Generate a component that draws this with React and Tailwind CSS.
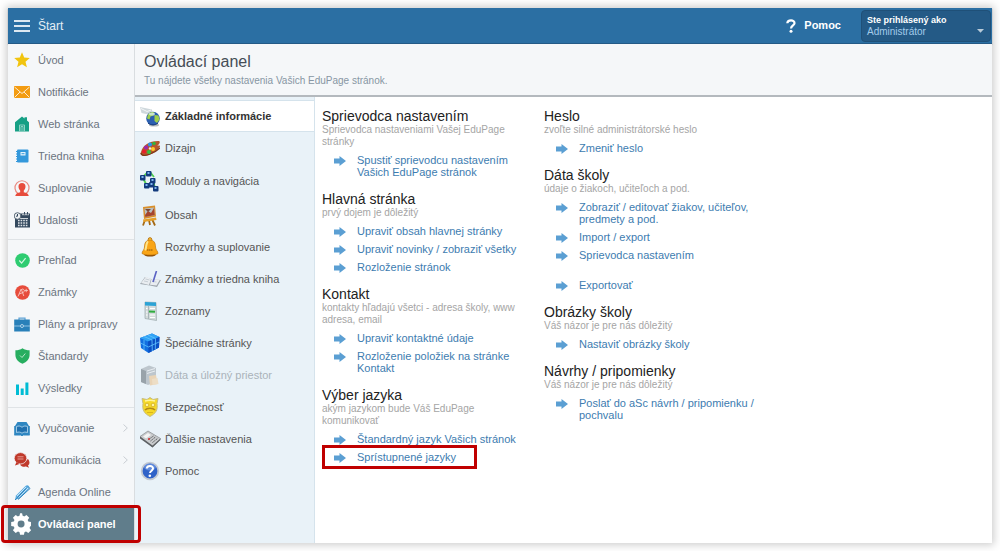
import React from "react";
import clsx from "clsx";

const svg = (w, h, vb, children) => (
  <svg width={w} height={h} viewBox={vb} className="shrink-0" aria-hidden="true">
    {children}
  </svg>
);

const sideIcons = {
  star: svg(16, 16, "0 0 16 16", <path d="M8 .3l2.2 5.3 5.6.4-4.3 3.7 1.4 5.6L8 12.3l-4.9 3 1.4-5.6L.2 6l5.6-.4z" fill="#f1c40f" />),
  mail: svg(16, 12, "0 0 16 12", <>
    <rect width="16" height="12" fill="#f39c12" />
    <path d="M.5 1L8 7.5 15.5 1M.5 11.5L6 6M15.5 11.5L10 6" fill="none" stroke="#fdebd0" />
  </>),
  home: svg(16, 16, "0 0 16 16", <>
    <path d="M8 .5l2.5 2V1.3H13v3.2l2 1.8v9.2H1V6.3z" fill="#16a085" />
    <path d="M5.5 15.5V9h5v6.5M7 15.5V10.500h2v5" fill="none" stroke="#8ed1c3" />
  </>),
  book: svg(16, 16, "0 0 16 16", <>
    <rect x="3" y="1.500" width="11.500" height="13" rx="1" fill="#3498db" />
    <path d="M2 3.500h2M2 6h2M2 8.500h2M2 11h2M2 13.500h2" stroke="#3498db" />
    <rect x="6.500" y="4" width="5" height="3.500" fill="#e4f1fa" />
    <path d="M7.500 5.700h3" stroke="#3498db" />
  </>),
  person: svg(16, 17, "0 0 16 17", <>
    <path d="M4 13.500A7 7 0 1 1 12 13.500" fill="none" stroke="#e98a80" strokeWidth="1.200" />
    <path d="M8 3c2.300 0 3.500 1.400 3.500 3.500 0 1.600-.7 3-1.700 3.900v1.800c2.500.4 4.500 1.200 5 3.800H1.200c.5-2.600 2.500-3.400 5-3.800v-1.800C5.200 9.500 4.500 8.100 4.500 6.500 4.500 4.400 5.700 3 8 3z" fill="#e74c3c" />
  </>),
  calendar: svg(16, 16, "0 0 16 16", <>
    <path d="M1 1.500h15V15.500H1z" fill="#34495e" />
    <path d="M8 2.700h7M3 6.500h11" stroke="#f5f7f9" strokeWidth=".8" />
    <path d="M4 8.500h10M4 11h10M4 13.500h10" stroke="#dfe4e8" strokeWidth="1.400" strokeDasharray="1.600 1" />
    <circle cx="3.500" cy="4" r="3.300" fill="#eef1f3" stroke="#596977" />
    <path d="M3.500 2v2.200H2M10.500 0v2.500M13.500 0v2.500" stroke="#34495e" fill="none" />
  </>),
  check: svg(15, 15, "0 0 15 15", <>
    <circle cx="7.500" cy="7.500" r="7.300" fill="#2ecc71" />
    <path d="M4.300 7.500l2.300 2.600 4-5" fill="none" stroke="#d5f5e3" strokeWidth="1.200" />
  </>),
  grade: svg(15, 15, "0 0 15 15", <>
    <circle cx="7.500" cy="7.500" r="7.300" fill="#e74c3c" />
    <path d="M3 11.500L6.200 4l2.600 7M4 9l4-1.500M9.500 5.500h3.400M11.200 3.800v3.400M7 4c3 0 3 3 .8 3.500" fill="none" stroke="#f7c6c0" strokeWidth=".9" />
  </>),
  brief: svg(16, 15, "0 0 16 15", <>
    <path d="M5 3V1.200h6V3" fill="none" stroke="#5da2d5" strokeWidth="1.200" />
    <rect x=".2" y="2.500" width="15.600" height="12" fill="#2980b9" />
    <path d="M0 9h6.300M9.700 9H16" stroke="#9cc8e6" strokeWidth=".9" />
    <circle cx="8" cy="9" r="1.500" fill="#2980b9" stroke="#cfe4f2" strokeWidth=".8" />
  </>),
  shield: svg(15, 16, "0 0 15 16", <>
    <path d="M7.500.3C9.500 1.700 12 2.300 14.600 2.300v4.500c0 4.300-2.800 7.400-7.100 9C3.200 14.200.4 11.100.4 6.800V2.300C3 2.300 5.500 1.700 7.500.3z" fill="#27ae60" />
    <path d="M5 7.500l2 2 3.300-4" fill="none" stroke="#b9e7cb" />
  </>),
  bars: svg(14, 13, "0 0 14 13", <path d="M1 2.500h3V13H1zM5.700 6.500h3V13h-3zM10.400.5h3V13h-3z" fill="#00bcd4" />),
  teach: svg(16, 15, "0 0 16 15", <>
    <path d="M1 5L3.500 1h9L15 5v9H1z" fill="#2e86c1" />
    <path d="M2.500 5.500c2-.8 4-.6 5.500.8 1.500-1.400 3.500-1.600 5.500-.8v6c-2-.8-4-.5-5.500.7-1.500-1.200-3.500-1.500-5.500-.7z" fill="#1f6fae" stroke="#bcdcf0" strokeWidth=".8" />
    <path d="M.3 5v9h6.200l1.500.8 1.500-.8h6.200V5" fill="none" stroke="#2e86c1" />
  </>),
  chat: svg(16, 16, "0 0 16 16", <>
    <path d="M14 7c2 2.500 2 5 0 6.500l1 2.300-3-1.200c-3 .4-5-.5-6-2.200" fill="#c0392b" />
    <ellipse cx="6.500" cy="6.300" rx="6.300" ry="5.700" fill="#c0392b" stroke="#f5f7f9" strokeWidth=".7" />
    <path d="M2.500 10L1 13.500 5.500 12z" fill="#c0392b" />
    <path d="M3.500 4.800h6M3.500 7h6" stroke="#f0b8b2" strokeWidth=".8" />
  </>),
  pen: svg(17, 17, "0 0 17 17", <>
    <path d="M1 15.800l1-4.300L11.500 2c2-1.800 5 .6 3.200 2.900L5.500 14.500z" fill="#5dade2" />
    <path d="M1 15.800l1.800-1.300L12 4.500M4 15.500L16 4.500l-2-2" fill="none" stroke="#2980b9" />
    <path d="M3 12l9-9M4.700 13.500l9.500-9.700" stroke="#d6eaf8" strokeWidth=".9" />
  </>),
  gear: svg(22, 22, "0 0 24 24", <path fill="#fff" d="M21.800 14.100V9.900l-2.900-.6a7 7 0 0 0-.7-1.700l1.700-2.500-3-3-2.500 1.700a7 7 0 0 0-1.700-.7L12.100.2h-2.200L9.300 3.100a7 7 0 0 0-1.700.7L5.100 2.100l-3 3 1.700 2.500a7 7 0 0 0-.7 1.700l-2.900.6v4.200l2.900.6c.2.600.4 1.200.7 1.700l-1.700 2.500 3 3 2.500-1.700c.5.300 1.100.5 1.700.7l.6 2.900h4.200l.6-2.900c.6-.2 1.200-.4 1.700-.7l2.500 1.700 3-3-1.700-2.500c.3-.5.5-1.100.7-1.700zM11 15.800a3.800 3.800 0 1 1 0-7.600 3.800 3.800 0 0 1 0 7.600z" />),
};

const node = (x, y) => (
  <g key={`${x}-${y}`}>
    <rect x={x} y={y} width="5.500" height="5.500" rx="1" fill="#123a7d" />
    <rect x={x + 1.5} y={y + 1} width="2" height="2" fill="#7db4ee" />
  </g>
);

const menuIcons = {
  globe: svg(20, 21, "0 0 20 21", <>
    <path d="M0 1l12 2.500 1 6L1.500 7z" fill="#cfd8dc" />
    <path d="M1 2.500l6 3 4-1.500" fill="none" stroke="#f3f6f7" />
    <ellipse cx="14" cy="19" rx="5" ry="1.500" fill="#b5b9bb" />
    <circle cx="13" cy="12.500" r="6.800" fill="#2b5fb0" />
    <path d="M8 8.500c2-3 5-3 6.500-2l-1 3-3 1-1 3-2.500-1zM14.500 9l4 .5 1 4-2.500 3.500-2.500-2z" fill="#9fd04a" />
    <path d="M8 17c3 2.500 7 2.500 10 0" stroke="#173a78" fill="none" />
    <ellipse cx="12" cy="8" rx="3" ry="1.500" fill="#dcefff" opacity=".7" />
  </>),
  palette: svg(20, 17, "0 0 20 17", <>
    <path d="M1 12C3 5 9 1 18 1c3 0 2 3-1 5 3-1 4 0 2 2-3 4-8 7-14 8-4 0-5-2-4-4z" fill="#b5572c" />
    <path d="M1 13c0 3 5 3 9 1 4-1 8-4 10-6" fill="none" stroke="#7d3819" strokeWidth="1.200" />
    <circle cx="10" cy="4.500" r="2" fill="#2196f3" /><circle cx="6" cy="7.500" r="2" fill="#9c27b0" />
    <circle cx="4" cy="11.500" r="2" fill="#e91e29" /><circle cx="14" cy="3.500" r="1.800" fill="#35b33b" />
    <circle cx="9" cy="12" r="2" fill="#33c345" /><circle cx="13" cy="9" r="2" fill="#ffc928" />
    <circle cx="10" cy="8.500" r="1.200" fill="#f4e7dc" />
  </>),
  modules: svg(20, 23, "0 0 20 23", <>
    <path d="M4 6l4-4M10 2l4 5M3 8l4 8M11 9l4 8M10 14l5 0" stroke="#4fd04f" strokeWidth="1.800" />
    {node(6, 1)}{node(0, 5)}{node(10, 8)}{node(4, 13)}{node(13, 16)}{node(9, 12)}
  </>),
  easel: svg(20, 21, "0 0 20 21", <>
    <path d="M5 15L3 20.500M12 14l3 6.500M9 15l1 5" stroke="#a56a14" strokeWidth="1.800" />
    <path d="M3 2l12-1.500 1 11L4 14z" fill="#d98f2b" />
    <path d="M4.500 3.500l9.500-1 .8 7.500-9.500 2z" fill="#b9c0c0" />
    <path d="M5 10l3-4 3 2 3-5 .8 7-9.500 2z" fill="#a6452c" />
    <path d="M5 4h6l-3 3z" fill="#7c4a3a" />
    <path d="M3 14.500l13-2 .5 2.500-13 2z" fill="#e6a029" />
  </>),
  bell: svg(20, 20, "0 0 20 20", <>
    <ellipse cx="10" cy="17.500" rx="6" ry="2" fill="#8a4b06" />
    <circle cx="10" cy="2.500" r="1.800" fill="#ffcb3d" stroke="#b8720c" />
    <path d="M10 3c4 0 5.500 3 5.500 7 0 3 2.500 4 2.500 6.500-3 2-13 2-16 0C2 14 4.500 13 4.500 10c0-4 1.500-7 5.500-7z" fill="#f9a517" stroke="#c0770c" strokeWidth=".7" />
    <path d="M7.500 5c-1.500 2-1 5-2 7.500" stroke="#ffe58a" strokeWidth="2" fill="none" strokeLinecap="round" />
    <path d="M7 13h6" stroke="#8d5207" strokeDasharray="1.500 .5" />
  </>),
  journal: svg(21, 17, "0 0 21 17", <>
    <path d="M0 13l5-7 6 2 10 1-4 7-7-1.500z" fill="#9ea6ad" />
    <path d="M1 12l5-6.500 5 2.500-2 6zM11.500 8l8.500.5-3.500 6-6.500-.7z" fill="#e9edf1" />
    <path d="M4 10l4 .8M5.500 8l4 1M12.500 10.500l4 .5" stroke="#b9c2c9" strokeWidth=".7" />
    <path d="M16.500 0L13 11" stroke="#5a62c4" strokeWidth="1.600" />
  </>),
  list: svg(20, 21, "0 0 20 21", <>
    <path d="M5 1l11 .5.500 18L5 17.500z" fill="#d3dbdc" stroke="#9aa8ab" strokeWidth=".7" />
    <path d="M5 1l11 .5V5L5 4.500z" fill="#2ba3d6" />
    <path d="M8.500 5v13" stroke="#a8b5b8" />
    <path d="M9 10.500l6 .3" stroke="#2fad3f" strokeWidth="2" />
    <path d="M10 7.500h5M10 14h5M10 16.500h5M6 7.500h1.500M6 11h1.500M6 14h1.500" stroke="#fff" />
  </>),
  cube: svg(20, 20, "0 0 20 20", <>
    <path d="M0 5L12 .5 19.500 4 19 14.500 8.500 20 1 15z" fill="#126fe0" />
    <path d="M0 5L12 .5 19.500 4 8 8.500z" fill="#31a3f5" />
    <path d="M8 8.500L19.500 4 19 14.500 8.500 20z" fill="#0a4fc4" />
    <path d="M4 3.500l8 3.500.3 11M.5 10l7.800 4L19 9M8 2l7.500 3.500-.2 11M4 7v10" stroke="#62c5ff" strokeWidth=".8" fill="none" />
  </>),
  server: svg(20, 21, "0 0 20 21", <g opacity=".55">
    <path d="M1 4l8-3.500 7 2.500v14L8 20l-7-3z" fill="#9aa3aa" />
    <path d="M1 4l5 2v13l-5-2z" fill="#59636c" />
    <path d="M7 6l8-2.500M7 8.500l8-2.500" stroke="#e7eaec" />
    <path d="M9 11l7-1 1.500 9-7.500 1.500z" fill="#e9bd83" />
    <path d="M12 14l5.500-1 1 6-6 1z" fill="#f2cf9f" />
  </g>),
  guard: svg(20, 20, "0 0 20 20", <>
    <path d="M10 .5l3 2 5-1-1 5c1 6-1 10-7 13-6-3-8-7-7-13l-1-5 5 1z" fill="#f5d827" stroke="#c7bd83" />
    <path d="M5 4c3-1 7-1 10 0" stroke="#fff49a" strokeWidth="1.500" fill="none" />
    <circle cx="7" cy="8" r="1.800" fill="#fff3a0" stroke="#c49c0e" strokeWidth=".6" />
    <circle cx="13" cy="8" r="1.800" fill="#fff3a0" stroke="#c49c0e" strokeWidth=".6" />
    <path d="M5 13c2-2.500 8-2.500 10 0" stroke="#b58a13" strokeWidth="1.500" fill="none" />
    <path d="M7 15.500h6" stroke="#d9b51b" />
  </>),
  device: svg(21, 18, "0 0 21 18", <>
    <path d="M0 6.500L8 1l12.500 7.500-8 8.500z" fill="#c9cbcd" stroke="#85898c" strokeWidth=".7" />
    <path d="M0 6.500l12.500 9 8-7v1.500L12.500 17.500 0 8.500z" fill="#5d6164" />
    <path d="M3 6.500l5-3.500 3 2-5 3.500z" fill="#f3f4f4" />
    <path d="M8.500 9.500l5-3.500M10.500 11l5-4M12.500 12.500l5-4" stroke="#55595c" strokeDasharray="1.500 .8" />
    <circle cx="9" cy="9" r=".9" fill="#d22" />
  </>),
  help: svg(20, 20, "0 0 20 20", <>
    <circle cx="10" cy="10" r="8.300" fill="#2f62c8" stroke="#c3c9d2" strokeWidth="1.800" />
    <ellipse cx="10" cy="6" rx="6" ry="3.500" fill="#7ea5ea" opacity=".6" />
    <path d="M6.800 7.500c.3-3.500 6.600-3.300 6.200.2-.2 2-2.800 2-3 4.300" fill="none" stroke="#fff" strokeWidth="2" />
    <circle cx="9.800" cy="14.700" r="1.300" fill="#fff" />
  </>),
};

const sideGroups = [
  [
    { icon: "star", label: "Úvod" },
    { icon: "mail", label: "Notifikácie" },
    { icon: "home", label: "Web stránka" },
    { icon: "book", label: "Triedna kniha" },
    { icon: "person", label: "Suplovanie" },
    { icon: "calendar", label: "Udalosti" },
  ],
  [
    { icon: "check", label: "Prehľad" },
    { icon: "grade", label: "Známky" },
    { icon: "brief", label: "Plány a prípravy" },
    { icon: "shield", label: "Štandardy" },
    { icon: "bars", label: "Výsledky" },
  ],
  [
    { icon: "teach", label: "Vyučovanie", more: true },
    { icon: "chat", label: "Komunikácia", more: true },
    { icon: "pen", label: "Agenda Online" },
    { icon: "gear", label: "Ovládací panel", active: true },
  ],
];

const menu = [
  { icon: "globe", label: "Základné informácie", active: true },
  { icon: "palette", label: "Dizajn" },
  { icon: "modules", label: "Moduly a navigácia" },
  { icon: "easel", label: "Obsah" },
  { icon: "bell", label: "Rozvrhy a suplovanie" },
  { icon: "journal", label: "Známky a triedna kniha" },
  { icon: "list", label: "Zoznamy" },
  { icon: "cube", label: "Špeciálne stránky" },
  { icon: "server", label: "Dáta a úložný priestor", disabled: true },
  { icon: "guard", label: "Bezpečnosť" },
  { icon: "device", label: "Ďalšie nastavenia" },
  { icon: "help", label: "Pomoc" },
];

const columns = [
  [
    {
      title: "Sprievodca nastavením",
      text: "Sprievodca nastaveniami Vašej EduPage stránky",
      links: [{ label: "Spustiť sprievodcu nastavením Vašich EduPage stránok" }],
    },
    {
      title: "Hlavná stránka",
      text: "prvý dojem je dôležitý",
      links: [
        { label: "Upraviť obsah hlavnej stránky" },
        { label: "Upraviť novinky / zobraziť všetky" },
        { label: "Rozloženie stránok" },
      ],
    },
    {
      title: "Kontakt",
      text: "kontakty hľadajú všetci - adresa školy, www adresa, email",
      links: [{ label: "Upraviť kontaktné údaje" }, { label: "Rozloženie položiek na stránke Kontakt" }],
    },
    {
      title: "Výber jazyka",
      text: "akým jazykom bude Váš EduPage komunikovať",
      links: [{ label: "Štandardný jazyk Vašich stránok" }, { label: "Sprístupnené jazyky", marked: true }],
    },
  ],
  [
    { title: "Heslo", text: "zvoľte silné administrátorské heslo", links: [{ label: "Zmeniť heslo" }] },
    {
      title: "Dáta školy",
      text: "údaje o žiakoch, učiteľoch a pod.",
      links: [
        { label: "Zobraziť / editovať žiakov, učiteľov, predmety a pod." },
        { label: "Import / export" },
        { label: "Sprievodca nastavením" },
        { label: "Exportovať", spaced: true },
      ],
    },
    { title: "Obrázky školy", text: "Váš názor je pre nás dôležitý", links: [{ label: "Nastaviť obrázky školy" }] },
    {
      title: "Návrhy / pripomienky",
      text: "Váš názor je pre nás dôležitý",
      links: [{ label: "Poslať do aSc návrh / pripomienku / pochvalu" }],
    },
  ],
];

function Header() {
  return (
    <header className="flex h-9 items-center justify-between border-b border-[#245a86] bg-[#2b6fa3] text-white shadow-[0_1px_1px_#8a9096]">
      <div className="flex items-center gap-2 pl-1.5">
        <button aria-label="Menu" className="flex w-4 flex-col gap-[3px]">
          <span className="h-0.5 bg-[#dce8f1]" />
          <span className="h-0.5 bg-[#dce8f1]" />
          <span className="h-0.5 bg-[#dce8f1]" />
        </button>
        <span className="text-xs text-[#e4eef5]">Štart</span>
      </div>
      <div className="flex items-center gap-5 pr-px">
        <a href="#pomoc" className="flex items-center gap-2 text-[11px] font-bold">
          {svg(10, 14, "0 0 10 14", <>
            <path d="M1.300 4.200C1.500.4 8.700.4 8.500 4.200 8.400 6.500 5.200 6.300 5 9.500" fill="none" stroke="#fff" strokeWidth="2.200" />
            <circle cx="5" cy="12.200" r="1.500" fill="#fff" />
          </>)}
          Pomoc
        </a>
        <button className="flex h-8 w-[130px] justify-between rounded-sm border border-[#1f5078] bg-[#245a86] pr-1.5 pl-[5px] text-left">
          <span className="pt-[3px]">
            <b className="block text-[9px] leading-3">Ste prihlásený ako</b>
            <span className="block text-[10px] leading-3 text-[#a3cbea]">Administrátor</span>
          </span>
          <span className="flex items-end pb-2">
            {svg(7, 4, "0 0 7 4", <path d="M0 0h7L3.500 3.800z" fill="#b9cbd9" />)}
          </span>
        </button>
      </div>
    </header>
  );
}

function SideItem({ item }) {
  return (
    <a
      href="#"
      className={clsx(
        "relative flex h-8 items-center gap-2 pl-1.5 text-[11px]",
        item.active ? "bg-[#607d8b] font-bold text-white" : "text-[#6b7480]"
      )}
    >
      <span className="flex w-4 shrink-0 justify-center">{sideIcons[item.icon]}</span>
      <span className="grow">{item.label}</span>
      {item.more && (
        <span className="pr-1.5">
          {svg(5, 8, "0 0 5 8", <path d="M.5.5L4.300 4 .5 7.500" fill="none" stroke="#c9ced3" />)}
        </span>
      )}
      {item.active && <span className="absolute -inset-x-[7px] -inset-y-[3px] rounded-sm border-3 border-[#c00000]" />}
    </a>
  );
}

function MenuItem({ item }) {
  return (
    <a
      href="#"
      className={clsx(
        "flex min-h-8 items-center gap-[5px] pl-[5px] text-[11px]",
        item.icon === "modules" && "py-1.5",
        item.active && "border-y border-[#d5e3ec] bg-white font-bold text-[#333]",
        item.disabled ? "text-[#a9b3ba]" : !item.active && "text-[#555]"
      )}
    >
      <span className="flex w-5 shrink-0 justify-center">{menuIcons[item.icon]}</span>
      {item.label}
    </a>
  );
}

function Section({ section }) {
  return (
    <section>
      <h2 className="text-sm leading-4 text-[#222]">{section.title}</h2>
      <p className="mb-[3px] w-[204px] text-[10px] leading-3 text-[#a5a5a5]">{section.text}</p>
      <ul>
        {section.links.map((l) => (
          <li key={l.label} className={clsx("relative py-[3px] pr-2 pl-3", l.spaced && "mt-3")}>
            <a href="#" className="flex gap-[11px] text-[11px] leading-3 text-[#3d7cb0]">
              <span className="pt-0.5">
                {svg(12, 10, "0 0 12 10", <path d="M0 2.500h5.500V0L12 5 5.500 10V7.500H0z" fill="#5b9fd3" />)}
              </span>
              {l.label}
            </a>
            {l.marked && <span className="absolute -inset-y-[3px] left-0 w-[155px] border-3 border-[#c00000]" />}
          </li>
        ))}
      </ul>
    </section>
  );
}

export default function App() {
  return (
    <div className="bg-white p-2 font-['Liberation_Sans',Arial,sans-serif]">
      <div className="bg-white shadow-[0_0_8px_2px_rgba(0,0,0,0.2)]">
        <Header />
        <div className="flex">
          <nav className="w-[127px] shrink-0 border-r border-[#d9dde0] bg-[#f5f7f9] pb-[3px]">
            {sideGroups.map((group, i) => (
              <div
                key={i}
                className={clsx(i > 0 && "pt-1", i < sideGroups.length - 1 && "border-b border-[#dfe3e6] pb-[3px]")}
              >
                {group.map((item) => (
                  <SideItem key={item.label} item={item} />
                ))}
              </div>
            ))}
          </nav>
          <div className="flex min-w-0 grow flex-col">
            <div className="border-b-2 border-[#b4b9be] bg-[#f5f7f9] px-[9px] pt-2 pb-[5px]">
              <h1 className="text-base leading-5 text-[#454d56]">Ovládací panel</h1>
              <p className="text-[10px] leading-[18px] text-[#8796a3]">
                Tu nájdete všetky nastavenia Vašich EduPage stránok.
              </p>
            </div>
            <div className="flex grow">
              <nav className="w-[180px] shrink-0 border-r border-[#d5e3ec] bg-[#e9f2f8] pt-[3px]">
                {menu.map((item) => (
                  <MenuItem key={item.label} item={item} />
                ))}
              </nav>
              <main className="flex grow pt-[11px] pl-[7px]">
                {columns.map((col, i) => (
                  <div key={i} className="flex w-[222px] flex-col gap-2.5">
                    {col.map((s) => (
                      <Section key={s.title} section={s} />
                    ))}
                  </div>
                ))}
              </main>
            </div>
          </div>
        </div>
      </div>
    </div>
  );
}
